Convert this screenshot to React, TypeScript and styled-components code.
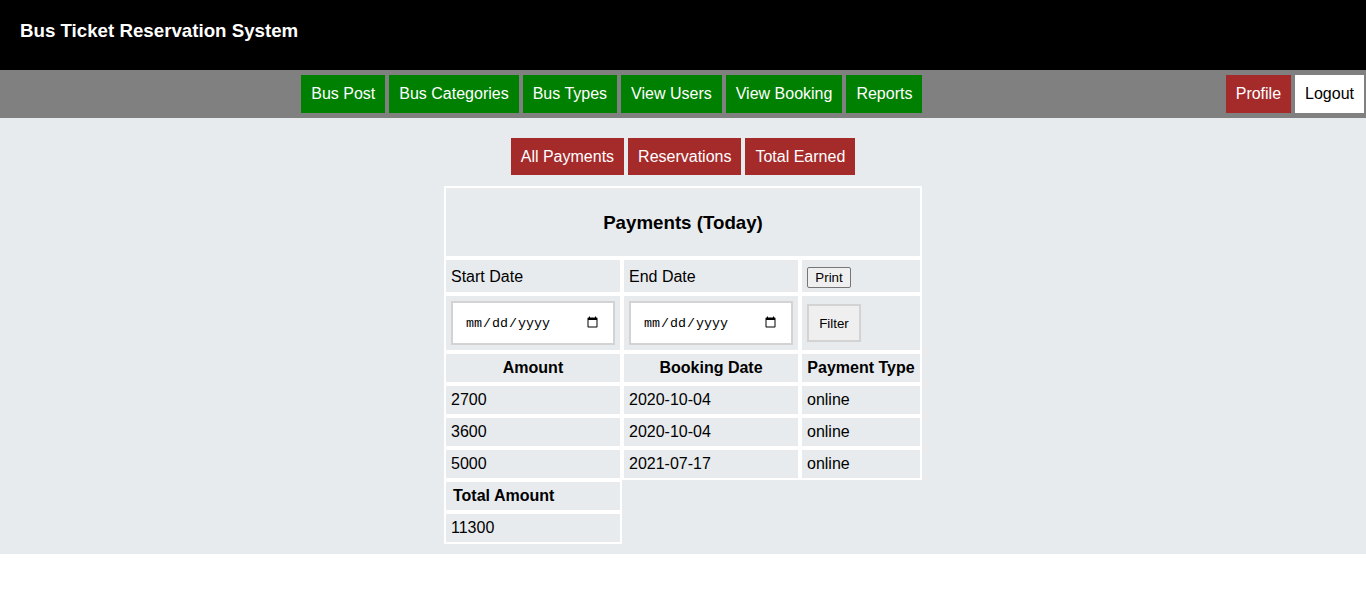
import React from "react";
import styled, { createGlobalStyle } from "styled-components";

const Global = createGlobalStyle`
  html, body { margin: 0; padding: 0; background: #fff; }
  body { font-family: "Liberation Sans", Arial, sans-serif; color: #000; }
  * { box-sizing: border-box; }
`;

const Header = styled.header`
  height: 70px;
  background: #000;
  padding: 20px 20px 0;
`;

const Brand = styled.h3`
  margin: 0;
  color: #fff;
  font-size: 18.72px;
  line-height: 22px;
  font-weight: bold;
`;

const Nav = styled.nav`
  display: flex;
  align-items: center;
  height: 48px;
  background: #808080;
  padding: 5px 2px 5px 2px;
`;

const NavCenter = styled.div`
  flex: 1;
  display: flex;
  justify-content: center;
  gap: 4px;
  padding-right: 4px;
`;

const NavRight = styled.div`
  display: flex;
  gap: 4px;
`;

const NavButton = styled.a<{ $bg: string; $fg?: string }>`
  display: flex;
  align-items: center;
  height: 38px;
  padding: 0 10px;
  background: ${(p) => p.$bg};
  color: ${(p) => p.$fg || "#fff"};
  font-size: 16px;
  text-decoration: none;
  cursor: pointer;
`;

const Main = styled.main`
  background: #e8ebee;
  padding: 20px 0 10px;
`;

const Tabs = styled.div`
  display: flex;
  justify-content: center;
  gap: 4px;
  margin-bottom: 11px;
`;

const Tab = styled.a`
  display: flex;
  align-items: center;
  height: 37px;
  padding: 0 10px;
  background: #a52a2a;
  color: #fff;
  font-size: 16px;
  text-decoration: none;
`;

const Table = styled.table`
  width: 478px;
  margin: 0 auto;
  border-collapse: separate;
  border-spacing: 0;
  font-size: 16px;
  line-height: 18px;
`;

const Cell = styled.td<{ $w?: number; $bold?: boolean; $center?: boolean; $h?: number; $indent?: boolean }>`
  border: 2px solid #fff;
  padding: ${(p) => (p.$h ? "6px 5px 4px" : "5px")};
  padding-left: ${(p) => (p.$indent ? "7px" : "5px")};
  width: ${(p) => (p.$w ? `${p.$w}px` : "auto")};
  height: ${(p) => (p.$h ? `${p.$h}px` : "auto")};
  font-weight: ${(p) => (p.$bold ? "bold" : "normal")};
  text-align: ${(p) => (p.$center ? "center" : "left")};
  vertical-align: middle;
`;

const TitleCell = styled.th`
  border: 2px solid #fff;
  padding: 24px 5px 22px;
  font-size: 18.72px;
  line-height: 22px;
  font-weight: bold;
  text-align: center;
`;

const PrintButton = styled.button`
  font-family: "Liberation Sans", Arial, sans-serif;
  font-size: 13.33px;
  line-height: 15px;
  padding: 1px 7px;
  margin: 0;
  background: #efefef;
  border: 1px solid #767676;
  border-radius: 2px;
  color: #000;
  height: 21px;
  width: 44px;
  vertical-align: middle;
`;

const DateInput = styled.input`
  width: 100%;
  height: 44px;
  padding: 12px;
  border: 2px solid #d3d3d3;
  background: #fff;
  font-family: "Liberation Mono", monospace;
  font-size: 13.33px;
  color: #000;
  display: block;
`;

const FilterButton = styled.button`
  font-family: "Liberation Sans", Arial, sans-serif;
  font-size: 13.33px;
  line-height: 15px;
  padding: 10px;
  height: 38px;
  width: 54px;
  background: #efefef;
  border: 2px solid #d3d3d3;
  color: #000;
  display: block;
`;

const rows = [
  { amount: "2700", date: "2020-10-04", type: "online" },
  { amount: "3600", date: "2020-10-04", type: "online" },
  { amount: "5000", date: "2021-07-17", type: "online" },
];

export default function App() {
  return (
    <>
      <Global />
      <Header>
        <Brand>Bus Ticket Reservation System</Brand>
      </Header>
      <Nav>
        <NavCenter>
          {["Bus Post", "Bus Categories", "Bus Types", "View Users", "View Booking", "Reports"].map((l) => (
            <NavButton key={l} $bg="#008000">{l}</NavButton>
          ))}
        </NavCenter>
        <NavRight>
          <NavButton $bg="#a52a2a">Profile</NavButton>
          <NavButton $bg="#fff" $fg="#000">Logout</NavButton>
        </NavRight>
      </Nav>
      <Main>
        <Tabs>
          <Tab>All Payments</Tab>
          <Tab>Reservations</Tab>
          <Tab>Total Earned</Tab>
        </Tabs>
        <Table>
          <tbody>
            <tr>
              <TitleCell colSpan={3}>Payments (Today)</TitleCell>
            </tr>
            <tr>
              <Cell $w={178} $h={36}>Start Date</Cell>
              <Cell $w={178} $h={36}>End Date</Cell>
              <Cell $w={122} $h={36}>
                <PrintButton>Print</PrintButton>
              </Cell>
            </tr>
            <tr>
              <Cell>
                <DateInput type="date" />
              </Cell>
              <Cell>
                <DateInput type="date" />
              </Cell>
              <Cell>
                <FilterButton>Filter</FilterButton>
              </Cell>
            </tr>
            <tr>
              <Cell as="th" $bold $center>Amount</Cell>
              <Cell as="th" $bold $center>Booking Date</Cell>
              <Cell as="th" $bold $center>Payment Type</Cell>
            </tr>
            {rows.map((r, i) => (
              <tr key={i}>
                <Cell>{r.amount}</Cell>
                <Cell>{r.date}</Cell>
                <Cell>{r.type}</Cell>
              </tr>
            ))}
            <tr>
              <Cell as="th" $bold $indent>Total Amount</Cell>
            </tr>
            <tr>
              <Cell>11300</Cell>
            </tr>
          </tbody>
        </Table>
      </Main>
    </>
  );
}
